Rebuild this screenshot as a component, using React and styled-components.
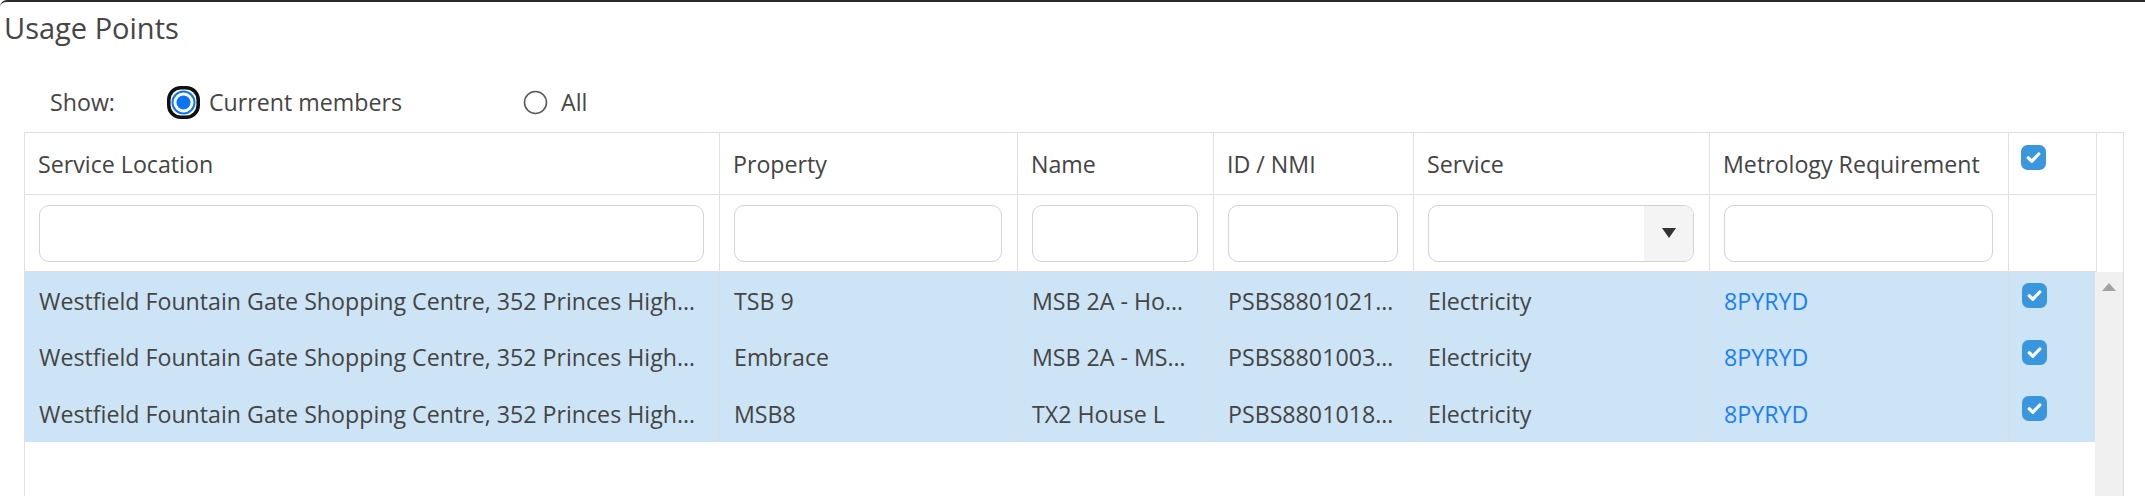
import React from "react";
import styled, { createGlobalStyle } from "styled-components";

const GlobalStyle = createGlobalStyle`
  * { box-sizing: border-box; }
  body {
    margin: 0;
    background: #ffffff;
    font-family: "Open Sans", "Noto Sans", Arial, sans-serif;
    color: #444444;
  }
`;

const COLS = "695px 298px 196px 200px 296px 299px 88px";
const BODY_COLS = "695px 298px 196px 200px 296px 299px 86px";

const columns = [
  "Service Location",
  "Property",
  "Name",
  "ID / NMI",
  "Service",
  "Metrology Requirement",
];

const rows = [
  {
    location: "Westfield Fountain Gate Shopping Centre, 352 Princes High…",
    property: "TSB 9",
    name: "MSB 2A - Ho…",
    nmi: "PSBS8801021…",
    service: "Electricity",
    metrology: "8PYRYD",
  },
  {
    location: "Westfield Fountain Gate Shopping Centre, 352 Princes High…",
    property: "Embrace",
    name: "MSB 2A - MS…",
    nmi: "PSBS8801003…",
    service: "Electricity",
    metrology: "8PYRYD",
  },
  {
    location: "Westfield Fountain Gate Shopping Centre, 352 Princes High…",
    property: "MSB8",
    name: "TX2 House L",
    nmi: "PSBS8801018…",
    service: "Electricity",
    metrology: "8PYRYD",
  },
];

const CheckIcon = () => (
  <svg width="25" height="25" viewBox="0 0 25 25">
    <rect x="0" y="0" width="25" height="25" rx="6.5" fill="#3a97dd" />
    <path
      d="M7.2 12.8 L10.9 16.2 L17.8 9"
      fill="none"
      stroke="#ffffff"
      strokeWidth="3.2"
      strokeLinecap="round"
      strokeLinejoin="round"
    />
  </svg>
);

const RadioIcon = ({ checked }) =>
  checked ? (
    <svg width="33" height="33" viewBox="0 0 33 33">
      <rect x="1.8" y="1.8" width="29.4" height="29.4" rx="12" fill="#ffffff" stroke="#111111" strokeWidth="3.6" />
      <circle cx="16.5" cy="16.5" r="11" fill="#ffffff" stroke="#0b76f5" strokeWidth="2" />
      <circle cx="16.5" cy="16.5" r="7" fill="#0b76f5" />
    </svg>
  ) : (
    <svg width="33" height="33" viewBox="0 0 33 33">
      <circle cx="16.5" cy="16.5" r="11" fill="#ffffff" stroke="#5a5a5a" strokeWidth="1.6" />
    </svg>
  );

const App = () => {
  return (
    <Frame>
      <GlobalStyle />
      <Title>Usage Points</Title>
      <ShowBar>
        <ShowLabel>Show:</ShowLabel>
        <Option $width={352}>
          <RadioIcon checked />
          <span>Current members</span>
        </Option>
        <Option>
          <RadioIcon />
          <span>All</span>
        </Option>
      </ShowBar>

      <Table>
        <Head>
          {columns.map((c) => (
            <HeadCell key={c}>{c}</HeadCell>
          ))}
          <HeadCell $check>
            <CheckIcon />
          </HeadCell>
          <Gutter />
          {columns.map((c) =>
            c === "Service" ? (
              <FilterCell key={c}>
                <SelectBox>
                  <SelectButton>
                    <svg width="14" height="10" viewBox="0 0 14 10">
                      <path d="M0 0 H14 L7 10 Z" fill="#333333" />
                    </svg>
                  </SelectButton>
                </SelectBox>
              </FilterCell>
            ) : (
              <FilterCell key={c}>
                <FilterInput />
              </FilterCell>
            )
          )}
          <FilterCell />
        </Head>

        <Body>
          <Rows>
            {rows.map((r, i) => (
              <Row key={i}>
                <Cell>{r.location}</Cell>
                <Cell>{r.property}</Cell>
                <Cell>{r.name}</Cell>
                <Cell>{r.nmi}</Cell>
                <Cell>{r.service}</Cell>
                <Cell>
                  <Link>{r.metrology}</Link>
                </Cell>
                <Cell $check>
                  <CheckIcon />
                </Cell>
              </Row>
            ))}
          </Rows>
          <ScrollBar>
            <ScrollArrow />
          </ScrollBar>
        </Body>
      </Table>
    </Frame>
  );
};

const Frame = styled.div`
  width: 2145px;
  height: 496px;
  overflow: hidden;
  border-top: 2px solid #2b2b2b;
  border-top-left-radius: 7px;
  background: #ffffff;
`;

const Title = styled.h1`
  margin: 7px 0 0 4px;
  font-size: 29px;
  line-height: 38px;
  font-weight: 400;
  color: #454545;
`;

const ShowBar = styled.div`
  display: flex;
  align-items: center;
  margin: 39px 0 0 50px;
  height: 32px;
  font-size: 23.2px;
  color: #454545;
`;

const ShowLabel = styled.span`
  width: 117px;
`;

const Option = styled.label`
  display: flex;
  align-items: center;
  gap: 9px;
  width: ${(p) => (p.$width ? `${p.$width}px` : "auto")};
  svg {
    flex: none;
  }
`;

const Table = styled.div`
  margin: 14px 0 0 24px;
  width: 2100px;
  border: 1px solid #dcdfe6;
  border-bottom: none;
  font-size: 23.2px;
  color: #444444;
`;

const Head = styled.div`
  display: grid;
  grid-template-columns: ${COLS} 26px;
  grid-template-rows: 62px 77px;
`;

const HeadCell = styled.div`
  display: flex;
  align-items: ${(p) => (p.$check ? "flex-start" : "center")};
  padding: ${(p) => (p.$check ? "12px 0 0 12px" : "0 14px 0 13px")};
  border-right: 1px solid #dcdfe6;
  border-bottom: 1px solid #dcdfe6;
  line-height: 32px;
  white-space: nowrap;
`;

const Gutter = styled.div`
  grid-row: span 2;
`;

const FilterCell = styled.div`
  display: flex;
  align-items: center;
  padding: 0 15px 0 14px;
  border-right: 1px solid #dcdfe6;
  border-bottom: 1px solid #dcdfe6;
`;

const FilterInput = styled.input`
  width: 100%;
  height: 57px;
  border: 1px solid #cfd3da;
  border-radius: 10px;
  background: #ffffff;
  outline: none;
`;

const SelectBox = styled.div`
  display: flex;
  justify-content: flex-end;
  width: 100%;
  height: 57px;
  border: 1px solid #cfd3da;
  border-radius: 10px;
  overflow: hidden;
  background: #ffffff;
`;

const SelectButton = styled.div`
  display: flex;
  align-items: center;
  justify-content: center;
  width: 49px;
  background: #f4f4f4;
`;

const Body = styled.div`
  display: flex;
  height: 224px;
`;

const Rows = styled.div`
  width: 2070px;
`;

const Row = styled.div`
  display: grid;
  grid-template-columns: ${BODY_COLS};
  height: 56.67px;
  background: #cce4f6;
`;

const Cell = styled.div`
  display: flex;
  align-items: ${(p) => (p.$check ? "flex-start" : "center")};
  padding: ${(p) => (p.$check ? "11px 0 0 13px" : "1px 12px 0 14px")};
  border-right: ${(p) => (p.$check ? "none" : "1px solid #d3dfe9")};
  line-height: 32px;
  white-space: nowrap;
  overflow: hidden;
  text-overflow: ellipsis;
  min-width: 0;
`;

const Link = styled.span`
  color: #1a7ff2;
`;

const ScrollBar = styled.div`
  display: flex;
  justify-content: center;
  width: 28px;
  background: #f0f0f0;
`;

const ScrollArrow = styled.div`
  margin-top: 11px;
  width: 0;
  height: 0;
  border-left: 7px solid transparent;
  border-right: 7px solid transparent;
  border-bottom: 8px solid #a3a3a3;
`;

export default App;
